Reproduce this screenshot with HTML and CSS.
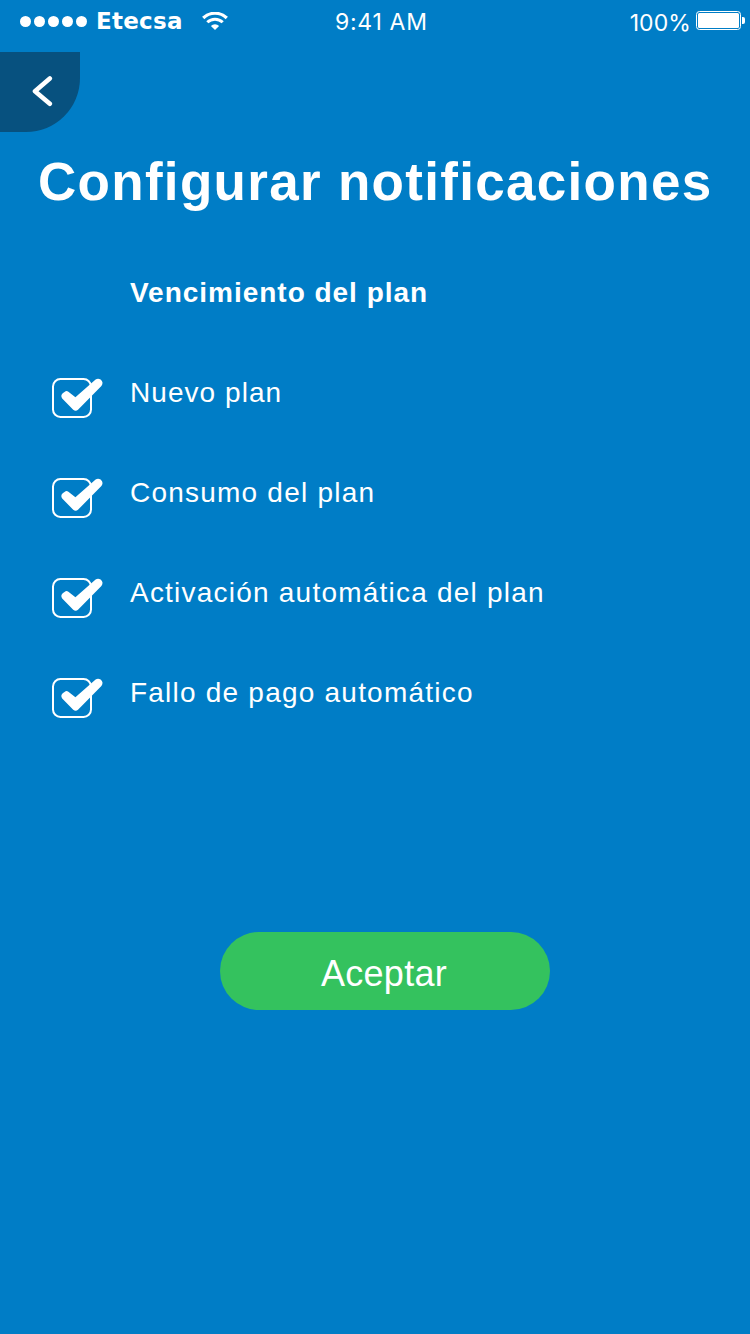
FILE: index.html
```html
<!DOCTYPE html>
<html lang="es">
<head>
<meta charset="utf-8">
<title>Configurar notificaciones</title>
<link rel="stylesheet" href="styles.css">
</head>
<body>
<svg class="defs" aria-hidden="true">
  <symbol id="check" viewBox="0 0 54 42">
    <rect x="3" y="2" width="38" height="38" rx="7.5" fill="none" stroke="#fff" stroke-width="2"/>
    <path d="M12.7 16.2 L15.6 14.2 Q17 13.7 18.4 14.8 L25.4 20.3 L45.6 2.6 Q48 0.8 50.6 2.6 Q54 5.4 51.4 9 L28 32.7 Q25.7 35 23.2 32.7 L12.2 21.4 Q10.2 18.6 12.7 16.2 Z" fill="#fff"/>
  </symbol>
</svg>
<div class="screen">
  <header class="status">
    <div class="status-left">
      <svg class="signal" viewBox="0 0 68 12" fill="#fff">
        <circle cx="5.5" cy="6.5" r="5.5"/><circle cx="19.5" cy="6.5" r="5.5"/><circle cx="33.5" cy="6.5" r="5.5"/><circle cx="47.5" cy="6.5" r="5.5"/><circle cx="61.5" cy="6.5" r="5.5"/>
      </svg>
      <span class="carrier">Etecsa</span>
      <svg class="wifi" viewBox="0 0 26 18" fill="none" stroke="#fff">
        <path d="M1.2 6 A17 17 0 0 1 24.8 6" stroke-width="3.2"/>
        <path d="M5.3 10.3 A11 11 0 0 1 20.7 10.3" stroke-width="3"/>
        <path d="M13 18 L8.9 13.9 A5.8 5.8 0 0 1 17.1 13.9 Z" fill="#fff" stroke="none"/>
      </svg>
    </div>
    <span class="time">9:41 AM</span>
    <div class="status-right">
      <span class="percent">100%</span>
      <svg class="battery" viewBox="0 0 50 20">
        <rect x="0.5" y="0.5" width="44" height="18" rx="3" fill="none" stroke="#fff"/>
        <rect x="2" y="2" width="41" height="15" rx="1.5" fill="#fff"/>
        <path d="M46 6 h1 q2 0 2 2 v3 q0 2 -2 2 h-1 z" fill="#fff"/>
      </svg>
    </div>
  </header>
  <button class="back" aria-label="Volver">
    <svg viewBox="0 0 22 32" fill="none" stroke="#fff" stroke-width="4.6" stroke-linecap="round" stroke-linejoin="round"><path d="M18.8 3.4 L4 16.2 L18.8 28.8"/></svg>
  </button>
  <h1 class="title">Configurar notificaciones</h1>
  <ul class="options">
    <li class="option option-current"><span class="label">Vencimiento del plan</span></li>
    <li class="option"><svg class="check"><use href="#check"/></svg><span class="label label-short">Nuevo plan</span></li>
    <li class="option"><svg class="check"><use href="#check"/></svg><span class="label">Consumo del plan</span></li>
    <li class="option"><svg class="check"><use href="#check"/></svg><span class="label">Activación automática del plan</span></li>
    <li class="option"><svg class="check"><use href="#check"/></svg><span class="label">Fallo de pago automático</span></li>
  </ul>
  <button class="accept">Aceptar</button>
</div>
</body>
</html>
```
FILE: styles.css
```css
* { box-sizing: border-box; }
body { margin: 0; background: #007dc6; }
.defs { display: none; }
.screen {
  display: flex;
  flex-direction: column;
  align-items: flex-start;
  width: 750px;
  height: 1334px;
  overflow: hidden;
  background: #007dc6;
  color: #fff;
  font-family: "Liberation Sans", Arial, sans-serif;
}
button { border: 0; padding: 0; color: inherit; font-family: inherit; }
.status {
  display: grid;
  grid-template-columns: 335px 1fr auto;
  width: 100%;
  height: 52px;
  padding-right: 4px;
  line-height: 42px;
  white-space: nowrap;
}
.status-left, .status-right { display: flex; align-items: center; height: 42px; }
.status-left { padding-left: 20px; }
.signal { width: 68px; height: 12px; }
.carrier {
  margin-left: 8px;
  width: 106px;
  font: bold 23px/44px "DejaVu Sans", Verdana, sans-serif;
  letter-spacing: 0.25px;
}
.wifi { width: 26px; height: 18px; }
.time, .percent { font-family: Inter, sans-serif; font-weight: 400; font-size: 23px; }
.time { line-height: 44px; letter-spacing: 0.7px; }
.percent { padding-top: 3px; margin-right: 5px; letter-spacing: 0.1px; }
.battery { width: 50px; height: 20px; }
.back {
  display: flex;
  align-items: center;
  width: 80px;
  height: 80px;
  padding: 0 0 2px 31px;
  background: #07517f;
  border-radius: 0 0 54px 0;
}
.back svg { width: 22px; height: 32px; }
.title {
  margin: 20px 0 31px 38px;
  font-size: 53px;
  line-height: 60px;
  letter-spacing: 1.3px;
  white-space: nowrap;
}
.options { width: 100%; margin: 0; padding: 0; list-style: none; }
.option {
  display: grid;
  grid-template-columns: 80px 1fr;
  align-items: center;
  height: 100px;
  padding-left: 50px;
  font-size: 28px;
  letter-spacing: 1.22px;
}
.option-current { font-weight: bold; letter-spacing: 0.98px; }
.label { grid-column: 2; }
.label-short { letter-spacing: 1.05px; }
.check { width: 54px; height: 42px; margin-top: 9px; }
.accept {
  width: 330px;
  height: 78px;
  margin: 189px 0 0 220px;
  padding: 5px 2px 0 0;
  border-radius: 39px;
  background: #34c25e;
  font-size: 36px;
  letter-spacing: 0.3px;
}
```
